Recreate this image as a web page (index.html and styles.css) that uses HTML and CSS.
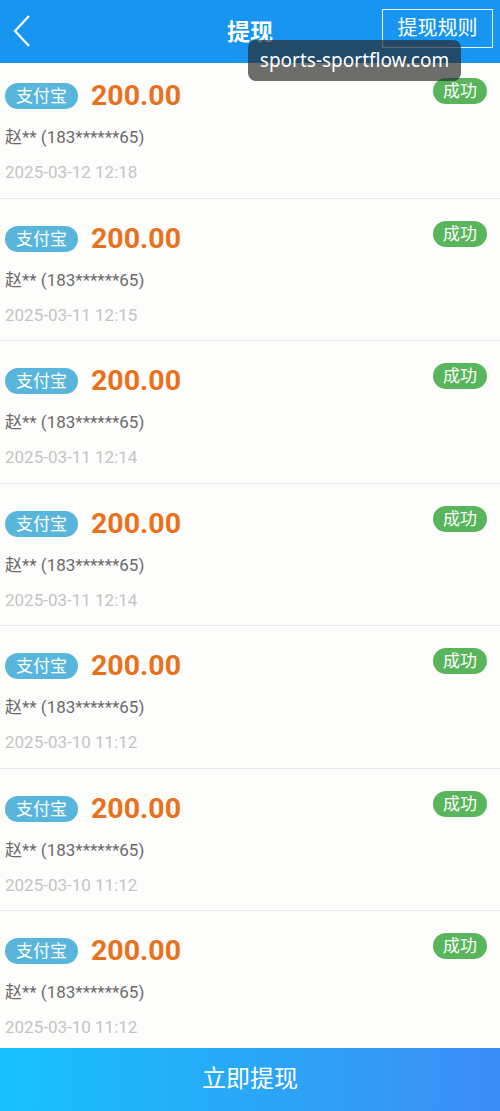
FILE: index.html
```
<!DOCTYPE html>
<html>
<head>
<meta charset="utf-8">
<title>提现</title>
<link rel="stylesheet" href="styles.css">
</head>
<body>
<div class="page">
  <div class="head">
    <span class="back"><svg width="20" height="34" viewBox="0 0 20 34"><polyline points="16,2 2,17 16,32" fill="none" stroke="#fff" stroke-width="2.2"/></svg></span>
    <h1>提现</h1>
    <span class="rule">提现规则</span>
  </div>
  <div class="mark">sports-sportflow.com</div>
  <ul class="list">
    <li>
      <div class="top"><span class="tag">支付宝</span><span class="money">200.00</span><span class="ok">成功</span></div>
      <p class="name">赵** (183******65)</p>
      <p class="time">2025-03-12 12:18</p>
    </li>
    <li>
      <div class="top"><span class="tag">支付宝</span><span class="money">200.00</span><span class="ok">成功</span></div>
      <p class="name">赵** (183******65)</p>
      <p class="time">2025-03-11 12:15</p>
    </li>
    <li>
      <div class="top"><span class="tag">支付宝</span><span class="money">200.00</span><span class="ok">成功</span></div>
      <p class="name">赵** (183******65)</p>
      <p class="time">2025-03-11 12:14</p>
    </li>
    <li>
      <div class="top"><span class="tag">支付宝</span><span class="money">200.00</span><span class="ok">成功</span></div>
      <p class="name">赵** (183******65)</p>
      <p class="time">2025-03-11 12:14</p>
    </li>
    <li>
      <div class="top"><span class="tag">支付宝</span><span class="money">200.00</span><span class="ok">成功</span></div>
      <p class="name">赵** (183******65)</p>
      <p class="time">2025-03-10 11:12</p>
    </li>
    <li>
      <div class="top"><span class="tag">支付宝</span><span class="money">200.00</span><span class="ok">成功</span></div>
      <p class="name">赵** (183******65)</p>
      <p class="time">2025-03-10 11:12</p>
    </li>
    <li>
      <div class="top"><span class="tag">支付宝</span><span class="money">200.00</span><span class="ok">成功</span></div>
      <p class="name">赵** (183******65)</p>
      <p class="time">2025-03-10 11:12</p>
    </li>
  </ul>
  <div class="foot">立即提现</div>
</div>
</body>
</html>
```
FILE: styles.css
```
*{ padding:0; margin:0; list-style:none; border:0; box-sizing:border-box;}
body{ font-family:Roboto, "Noto Sans CJK SC", sans-serif; background:#fdfdfc;}
.page{ width:500px; height:1111px; display:flex; flex-direction:column; position:relative; overflow:hidden;}

.head{ height:63px; flex:none; background:#1894f1; display:flex; align-items:center; padding:0 7px 0 13px; position:relative; z-index:2;}
.head .back{ width:20px; height:34px; margin-top:-2px;}
.head .back svg{ display:block;}
.head h1{ flex:1; text-align:center; color:#fff; font-size:23px; font-weight:bold; margin-left:85px; margin-top:-4px;}
.head .rule{ width:111px; height:39px; border:1.5px solid #e6f3ff; color:#fff; font-size:20px; line-height:36px; text-align:center; margin-top:-6px;}

.mark{ position:absolute; left:248px; top:40px; width:213px; height:41px; border-radius:8px; background:rgba(40,40,40,0.68); color:#fff; font-family:"Noto Sans", sans-serif; font-size:19px; line-height:41px; text-align:center; z-index:5;}

/* 列表稍微往上滚了一点 */
.list{ flex:1; overflow:hidden; margin-top:-7px;}
.list li{ height:142.5px; padding:21px 13px 0 5px; border-bottom:1px solid #e8e8e8; background:#fdfdfc;}
.list .top{ display:flex; align-items:center; height:38px;}
.list .tag{ height:26px; line-height:26px; padding:0 11px; border-radius:13px; background:#58b5db; color:#fff; font-size:17px;}
.list .money{ margin-left:13px; color:#e9711c; font-size:28.5px; font-weight:bold; line-height:38px;}
.list .ok{ margin-left:auto; align-self:flex-start; margin-top:1px; height:26px; line-height:26px; padding:0 10px; border-radius:13px; background:#59b55b; color:#fff; font-size:17px;}
.list .name{ margin-top:11px; line-height:22px; font-size:17px; color:#6a6a6a;}
.list .time{ margin-top:13px; line-height:22px; font-size:17px; color:#c4c4c4;}

.foot{ height:63px; flex:none; background:linear-gradient(to right, #16c2fb, #3c8cf5); color:#fff; font-size:24px; line-height:63px; text-align:center;}
```
